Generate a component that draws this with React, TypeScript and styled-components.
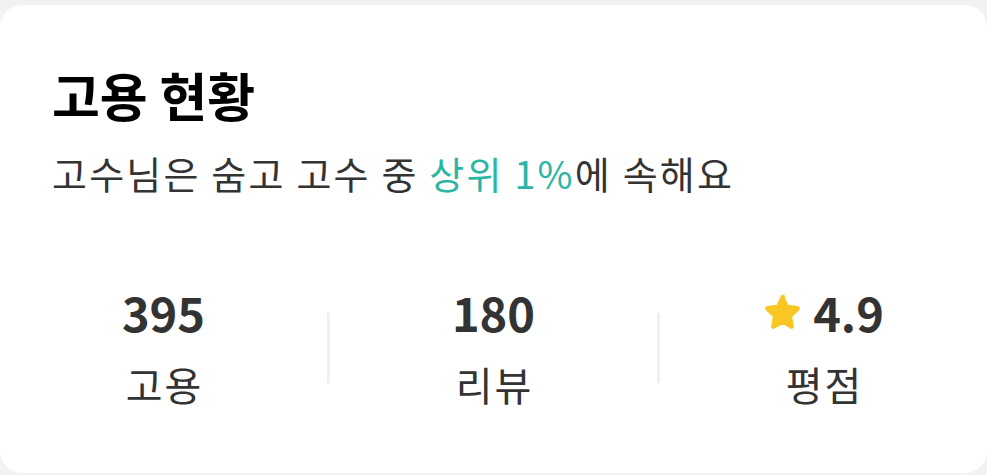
import React from 'react';
import styled, { createGlobalStyle } from 'styled-components';

const GlobalStyle = createGlobalStyle`
  html, body {
    margin: 0;
    padding: 0;
    background: #f2f2f2;
    font-family: 'Noto Sans CJK KR', 'Noto Sans', sans-serif;
  }
`;

const Page = styled.div`
  width: 987px;
  height: 475px;
  padding-top: 5px;
  box-sizing: border-box;
`;

const Card = styled.section`
  background: #ffffff;
  border-radius: 22px;
  height: 468px;
  padding: 58px 52px 0;
  box-sizing: border-box;
`;

const Title = styled.h2`
  margin: 0;
  font-size: 52px;
  font-weight: 700;
  color: #000000;
  line-height: 64px;
`;

const Subtitle = styled.p`
  margin: 21px 0 0;
  font-size: 38px;
  color: #333333;
  line-height: 50px;
  letter-spacing: 2.2px;
`;

const Highlight = styled.span`
  color: #2ab5a5;
`;

const Stats = styled.div`
  display: grid;
  grid-template-columns: 1fr 3px 1fr 3px 1fr;
  margin: 84px -52px 0;
`;

const Divider = styled.div`
  align-self: start;
  margin-top: 31px;
  height: 70px;
  background: #f0f0f0;
`;

const Stat = styled.div`
  display: flex;
  flex-direction: column;
  align-items: center;
`;

const Value = styled.div`
  display: flex;
  align-items: center;
  gap: 10px;
  font-size: 47px;
  font-weight: 700;
  color: #333333;
  line-height: 60px;
`;

const Label = styled.div`
  margin-top: 16px;
  font-size: 40px;
  color: #333333;
  line-height: 52px;
  letter-spacing: 2px;
  padding-left: 2px;
`;

const Star = () => (
  <svg width="40" height="40" viewBox="0 0 24 24">
    <path
      d="M12 2.8l2.7 5.6 6.1.8c.6.1.8.8.4 1.2l-4.5 4.2 1.1 6c.1.6-.5 1-1 .7L12 18.4l-5.4 2.9c-.5.3-1.1-.1-1-.7l1.1-6-4.5-4.2c-.4-.4-.2-1.1.4-1.2l6.1-.8 2.7-5.6c.2-.5.9-.5 1.2 0z"
      fill="#f9c623"
      stroke="#f9c623"
      strokeWidth="1.5"
      strokeLinejoin="round"
    />
  </svg>
);

const stats = [
  { value: '395', label: '고용' },
  { value: '180', label: '리뷰' },
  { value: '4.9', label: '평점', star: true },
];

export default function App() {
  return (
    <Page>
      <GlobalStyle />
      <Card>
        <Title>고용 현황</Title>
        <Subtitle>
          고수님은 숨고 고수 중 <Highlight>상위 1%</Highlight>에 속해요
        </Subtitle>
        <Stats>
          {stats.map((s, i) => (
            <React.Fragment key={s.label}>
              {i > 0 && <Divider />}
              <Stat>
                <Value>
                  {s.star && <Star />}
                  {s.value}
                </Value>
                <Label>{s.label}</Label>
              </Stat>
            </React.Fragment>
          ))}
        </Stats>
      </Card>
    </Page>
  );
}
